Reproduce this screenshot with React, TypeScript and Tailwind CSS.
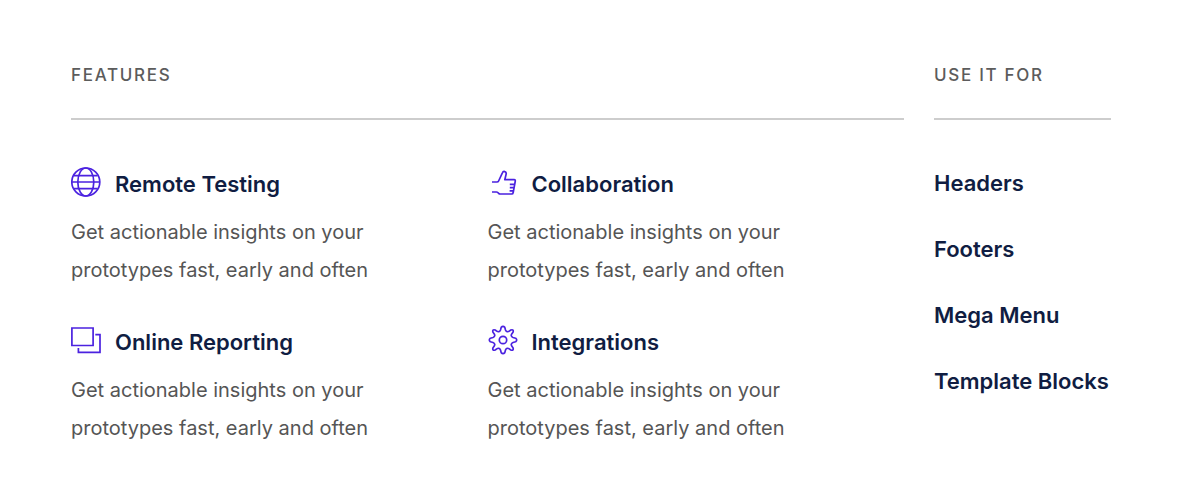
import type { ReactNode } from "react";

type Feature = {
  title: string;
  description: string;
  icon: ReactNode;
};

const features: Feature[] = [
  {
    title: "Remote Testing",
    description: "Get actionable insights on your prototypes fast, early and often",
    icon: (
      <>
        <circle cx="14.8" cy="15" r="14" />
        <ellipse cx="14.8" cy="15" rx="8" ry="14" />
        <path d="M.8 15h28M3 8.7h23.6M3 21.6h23.6" />
      </>
    ),
  },
  {
    title: "Collaboration",
    description: "Get actionable insights on your prototypes fast, early and often",
    icon: (
      <path d="M4 15h5c.8 0 1.3-.3 1.6-1l3.8-8.2c.5-1.2 1.4-1.6 2.4-1.2 1.2.4 1.6 1.4 1.3 2.6L16.8 12.7h9.3c1.2 0 1.3.8 1.1 1.8l-.5 2.9h-4.9M26.7 17.4l-.6 3.2h-4.3M26.1 20.6l-.6 3.2h-3.9M25.5 23.8l-.3 1.7c-.2 1.1-.7 1.5-1.5 1.5H12.2c-.7 0-1.1-.2-1.6-.7l-.8-.8c-.4-.4-.8-.5-1.4-.5H4" />
    ),
  },
  {
    title: "Online Reporting",
    description: "Get actionable insights on your prototypes fast, early and often",
    icon: (
      <path
        d="M.9 3h21.2v17.5H.9zM24.3 9.7H29v17.6H7.4V23"
        strokeLinejoin="miter"
      />
    ),
  },
  {
    title: "Integrations",
    description: "Get actionable insights on your prototypes fast, early and often",
    icon: (
      <>
        <path d="M13.2 2.4Q15 .2 16.8 2.4L17.5 5C18.2 6.9 19.8 7.2 21.3 6.1L22.8 5Q26 4 25 7.2L23.9 8.7C22.8 10.2 23.1 11.8 25 12.5L27.6 13.2Q29.8 15 27.6 16.8L25 17.5C23.1 18.2 22.8 19.8 23.9 21.3L25 22.8Q26 26 22.8 25L21.3 23.9C19.8 22.8 18.2 23.1 17.5 25L16.8 27.6Q15 29.8 13.2 27.6L12.5 25C11.8 23.1 10.2 22.8 8.7 23.9L7.2 25Q4 26 5 22.8L6.1 21.3C7.2 19.8 6.9 18.2 5 17.5L2.4 16.8Q.2 15 2.4 13.2L5 12.5C6.9 11.8 7.2 10.2 6.1 8.7L5 7.2Q4 4 7.2 5L8.7 6.1C10.2 7.2 11.8 6.9 12.5 5Z" />
        <circle cx="15" cy="15" r="3.7" />
      </>
    ),
  },
];

const useCases = ["Headers", "Footers", "Mega Menu", "Template Blocks"];

function SectionTitle({ children }: { children: ReactNode }) {
  return (
    <h2 className="border-b-2 border-[#cdcdcd] pb-[31px] text-[17px] leading-6 font-medium tracking-widest text-[#5c5c5c] uppercase">
      {children}
    </h2>
  );
}

function FeatureCard({ title, description, icon }: Feature) {
  return (
    <article>
      <div className="flex items-start gap-[14px]">
        <svg
          viewBox="0 0 30 30"
          className="size-[30px] shrink-0 fill-none stroke-[#4b22e0]"
          strokeWidth="1.7"
          strokeLinejoin="round"
          aria-hidden="true"
        >
          {icon}
        </svg>
        <h3 className="text-[22px] leading-[34px] font-semibold text-[#101d42]">
          {title}
        </h3>
      </div>
      <p className="mt-3 max-w-[320px] text-[20px] leading-[38px] text-[#555555]">
        {description}
      </p>
    </article>
  );
}

export default function App() {
  return (
    <main className="flex gap-[30px] bg-white pt-[63px] pr-[89px] pb-14 pl-[71px] font-['Inter','Liberation_Sans',sans-serif]">
      <section className="min-w-0 flex-1">
        <SectionTitle>Features</SectionTitle>
        <div className="mt-[47px] grid grid-cols-2 gap-y-9">
          {features.map((feature) => (
            <FeatureCard key={feature.title} {...feature} />
          ))}
        </div>
      </section>

      <nav className="w-[177px] shrink-0" aria-label="Use it for">
        <SectionTitle>Use it for</SectionTitle>
        <ul className="mt-[46px] flex flex-col gap-8">
          {useCases.map((label) => (
            <li key={label}>
              <a
                href="#"
                className="block text-[22px] leading-[34px] font-semibold whitespace-nowrap text-[#101d42]"
              >
                {label}
              </a>
            </li>
          ))}
        </ul>
      </nav>
    </main>
  );
}
